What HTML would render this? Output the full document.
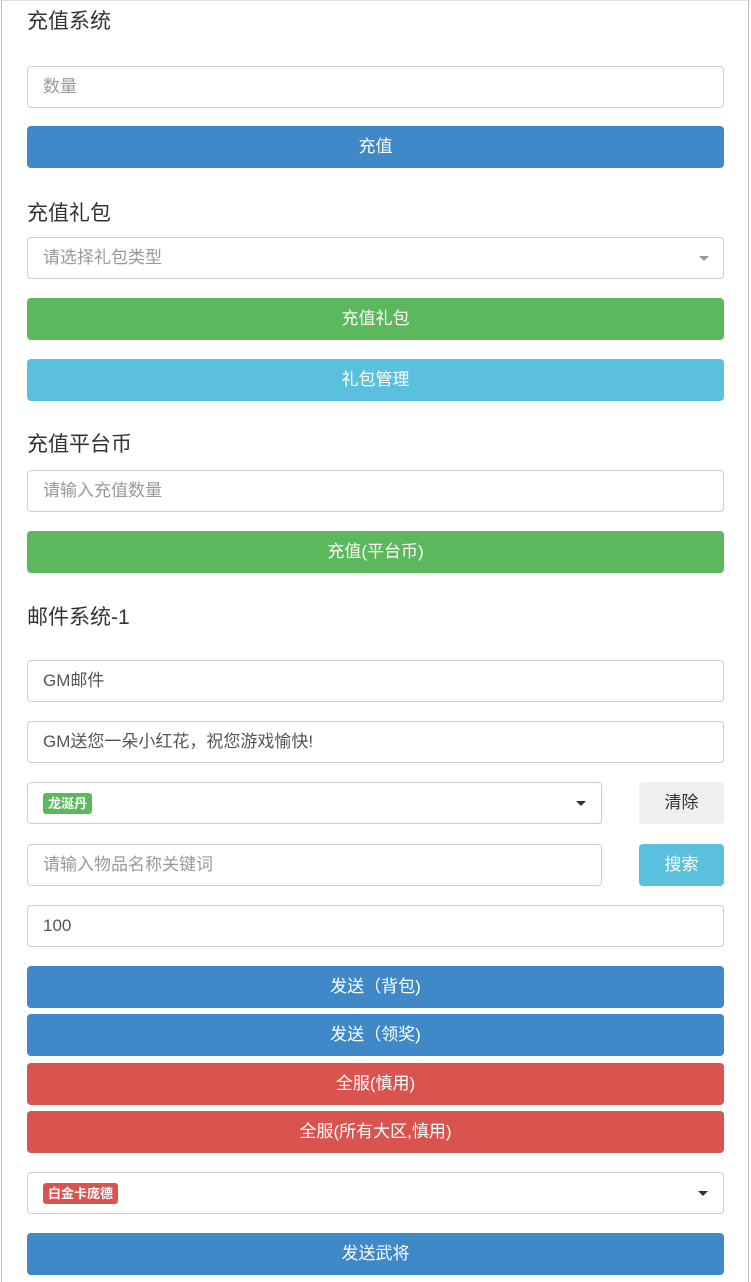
<!DOCTYPE html>
<html><head><meta charset="utf-8"><style>
*{box-sizing:border-box;margin:0;padding:0}
body{width:751px;height:1282px;background:#fff;position:relative;overflow:hidden;font-family:"Liberation Sans","Noto Sans CJK SC",sans-serif;color:#333}
.frame{position:absolute;left:1px;top:0;width:748px;height:1282px;border-left:1px solid #bbb;border-right:1px solid #bbb;border-top:1px solid #ddd}
.h{position:absolute;left:27px;font-size:21px;color:#333;line-height:28px}
.in{position:absolute;left:27px;width:697px;height:42px;border:1px solid #ccc;border-radius:4px;font-size:17px;line-height:40px;padding-left:15px;color:#555;background:#fff}
.ph{color:#999}
.b{position:absolute;left:27px;width:697px;height:42px;border-radius:4px;color:#fff;font-size:17px;text-align:center;line-height:42px}
.blue{background:#3f89c9}.green{background:#5cb85c}.info{background:#5bc0de}.red{background:#d9534f}
.tri{position:absolute;width:0;height:0;border-left:5px solid transparent;border-right:5px solid transparent;border-top:5px solid #333}
.tag{position:absolute;left:15px;top:10px;height:21px;line-height:21px;color:#fff;font-size:13px;font-weight:bold;padding:0 5px;border-radius:3px}
</style></head><body>
<div class="frame"></div>
<div class="h" style="top:8px">充值系统</div>
<div class="in ph" style="top:66px">数量</div>
<div class="b blue" style="top:126px">充值</div>
<div class="h" style="top:200px">充值礼包</div>
<div class="in ph" style="top:237px">请选择礼包类型<div class="tri" style="right:14px;top:18px;border-top-color:#999"></div></div>
<div class="b green" style="top:298px">充值礼包</div>
<div class="b info" style="top:359px">礼包管理</div>
<div class="h" style="top:431px">充值平台币</div>
<div class="in ph" style="top:470px">请输入充值数量</div>
<div class="b green" style="top:531px">充值(平台币)</div>
<div class="h" style="top:604px">邮件系统-1</div>
<div class="in" style="top:660px">GM邮件</div>
<div class="in" style="top:721px">GM送您一朵小红花，祝您游戏愉快!</div>
<div class="in" style="top:782px;width:575px"><span class="tag green">龙涎丹</span><div class="tri" style="right:15px;top:18px"></div></div>
<div class="b" style="top:782px;left:639px;width:85px;background:#efefef;color:#333">清除</div>
<div class="in ph" style="top:844px;width:575px">请输入物品名称关键词</div>
<div class="b info" style="top:844px;left:639px;width:85px">搜索</div>
<div class="in" style="top:905px">100</div>
<div class="b blue" style="top:966px">发送（背包)</div>
<div class="b blue" style="top:1014px">发送（领奖)</div>
<div class="b red" style="top:1063px">全服(慎用)</div>
<div class="b red" style="top:1111px">全服(所有大区,慎用)</div>
<div class="in" style="top:1172px"><span class="tag red">白金卡庞德</span><div class="tri" style="right:15px;top:18px"></div></div>
<div class="b blue" style="top:1233px">发送武将</div>
</body></html>
